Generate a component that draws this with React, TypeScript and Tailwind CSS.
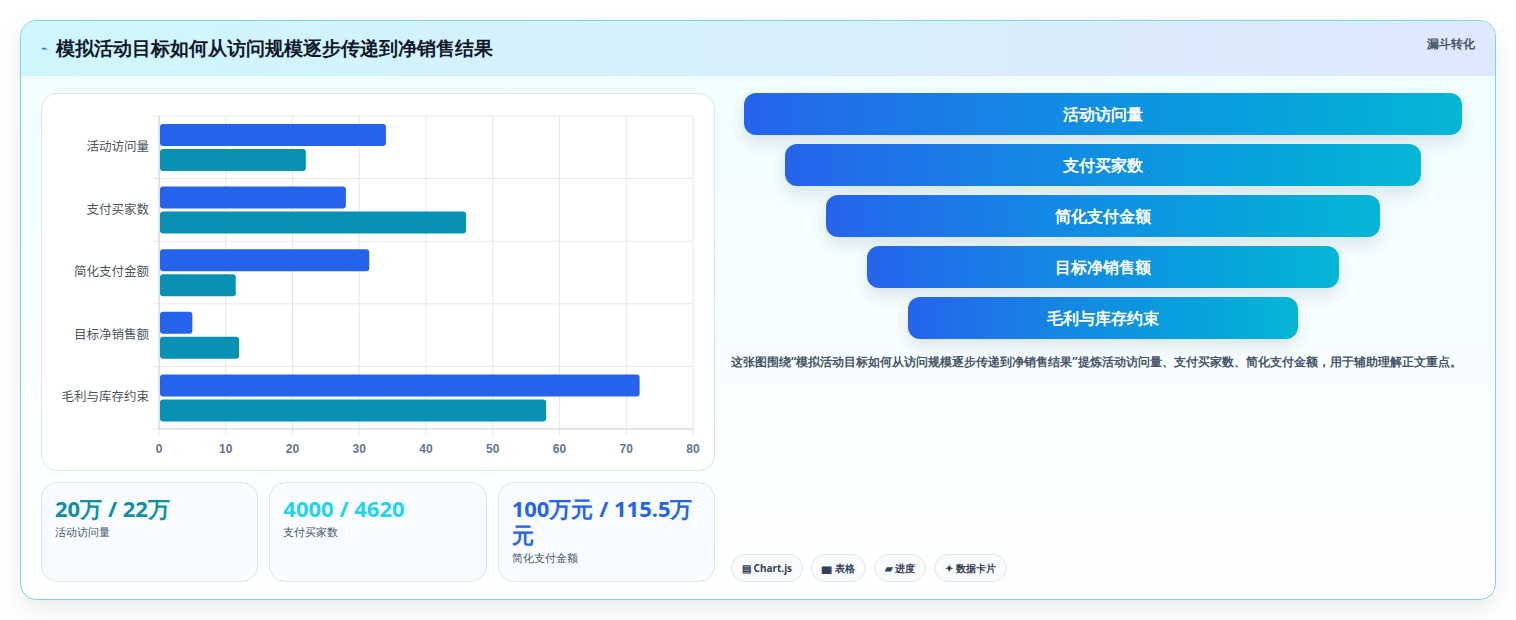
import React from "react";

const cats = ["活动访问量", "支付买家数", "简化支付金额", "目标净销售额", "毛利与库存约束"];
const a = [34, 28, 31.5, 5, 72];
const b = [22, 46, 11.5, 12, 58];

function Chart() {
  const x0 = 117, x1 = 651, y0 = 22, y1 = 335;
  const sx = (v: number) => x0 + ((x1 - x0) * v) / 80;
  const rowH = (y1 - y0) / 5;
  return (
    <svg width="674" height="377" className="block">
      {Array.from({ length: 9 }).map((_, i) => (
        <line key={i} x1={sx(i * 10)} x2={sx(i * 10)} y1={y0} y2={y1 + 6} stroke="#e5e7eb" />
      ))}
      {Array.from({ length: 6 }).map((_, i) => (
        <line key={i} x1={x0 - 6} x2={x1} y1={y0 + i * rowH} y2={y0 + i * rowH} stroke="#e5e7eb" />
      ))}
      <line x1={x0} x2={x0} y1={y0} y2={y1} stroke="#d1d5db" />
      <line x1={x0} x2={x1} y1={y1} y2={y1} stroke="#d1d5db" />
      {cats.map((c, i) => {
        const top = y0 + i * rowH;
        return (
          <g key={c}>
            <rect x={x0 + 1} y={top + 8} width={sx(a[i]) - x0 - 1} height={22} rx={3} fill="#2563eb" />
            <rect x={x0 + 1} y={top + 33} width={sx(b[i]) - x0 - 1} height={22} rx={3} fill="#0891b2" />
            <text x={x0 - 10} y={top + 35} textAnchor="end" fontSize="12.5" fill="#4b5563" fontFamily="'Noto Sans CJK SC', sans-serif">{c}</text>
          </g>
        );
      })}
      {Array.from({ length: 9 }).map((_, i) => (
        <text key={i} x={sx(i * 10)} y={y1 + 24} textAnchor="middle" fontSize="12" fontWeight="700" fill="#64748b" fontFamily="'Liberation Sans', sans-serif">{i * 10}</text>
      ))}
    </svg>
  );
}

const stats = [
  { v: "20万 / 22万", l: "活动访问量", c: "text-[#0e8fa6]" },
  { v: "4000 / 4620", l: "支付买家数", c: "text-[#22d3ee]" },
  { v: "100万元 / 115.5万元", l: "简化支付金额", c: "text-[#2563eb]" },
];

export default function App() {
  return (
    <div className="min-h-[620px] bg-white px-5 pt-5 font-['Noto_Sans_CJK_SC','Noto_Sans',sans-serif]">
      <div className="w-[1476px] h-[580px] rounded-2xl border border-[#7dd3e0] overflow-hidden shadow-[0_10px_24px_rgba(0,0,0,0.08)] bg-gradient-to-b from-[#effdff] to-white flex flex-col">
        <div className="h-[55px] shrink-0 bg-gradient-to-r from-[#cff7fc] to-[#dfe8fd] flex items-center justify-between pl-5 pr-5">
          <div className="flex items-center gap-2">
            <span className="text-[#2563eb] text-[11px]">⌁</span>
            <span className="text-[19px] font-bold text-[#0f172a]">模拟活动目标如何从访问规模逐步传递到净销售结果</span>
          </div>
          <span className="self-start mt-[14px] text-[12px] font-bold text-[#475569]">漏斗转化</span>
        </div>
        <div className="flex gap-4 px-5 pt-[17px]">
          <div className="w-[674px] flex flex-col gap-[11px]">
            <div className="h-[378px] rounded-2xl border border-[#dbe7f0] bg-white overflow-hidden">
              <Chart />
            </div>
            <div className="flex gap-[11px]">
              {stats.map((s) => (
                <div key={s.l} className="w-[218px] h-[100px] rounded-2xl border border-[#dbe7f0] bg-[#f8fbff] px-[13px] pt-[12px]">
                  <div className={`text-[22px] leading-[26px] font-bold ${s.c}`}>{s.v}</div>
                  <div className="text-[11px] text-[#475569] mt-[3px]">{s.l}</div>
                </div>
              ))}
            </div>
          </div>
          <div className="flex-1 flex flex-col">
            <div className="flex flex-col items-center gap-[9px] pt-0">
              {cats.map((c, i) => (
                <div
                  key={c}
                  style={{ width: 718 - i * 82 }}
                  className="h-[42px] rounded-xl bg-gradient-to-r from-[#2563eb] to-[#06b6d4] flex items-center justify-center text-white font-bold text-[16px] shadow-[0_8px_16px_rgba(15,60,90,0.12)]"
                >
                  {c}
                </div>
              ))}
            </div>
            <p className="mt-[12px] text-[12px] leading-[22px] font-bold text-[#475569]">
              这张图围绕“模拟活动目标如何从访问规模逐步传递到净销售结果”提炼活动访问量、支付买家数、简化支付金额，用于辅助理解正文重点。
            </p>
            <div className="mt-auto mb-[0px] flex gap-2 pb-0">
              {["▤ Chart.js", "▆ 表格", "▰ 进度", "✦ 数据卡片"].map((t) => (
                <span key={t} className="h-[28px] px-[10px] rounded-full border border-[#e2e8f0] bg-[#f8fafc] text-[10px] font-bold text-[#334155] flex items-center">{t}</span>
              ))}
            </div>
          </div>
        </div>
      </div>
    </div>
  );
}
